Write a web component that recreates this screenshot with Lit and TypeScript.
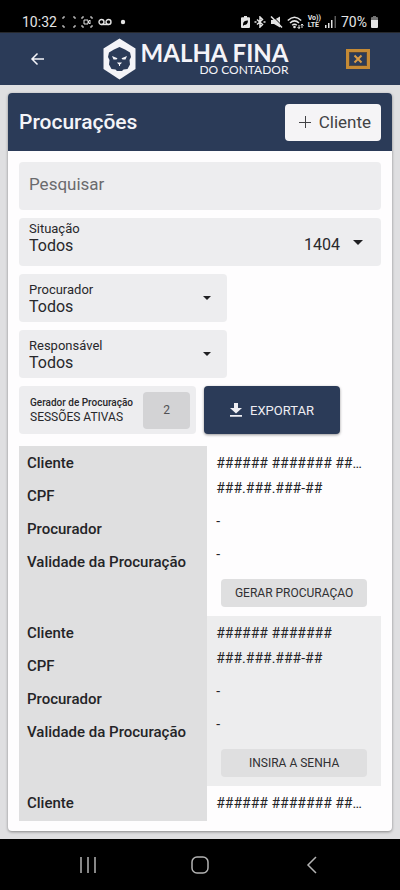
import { LitElement, html, css, svg, nothing } from "lit";
import { customElement, property } from "lit/decorators.js";

interface Cliente {
  nome: string;
  cpf?: string;
  procurador?: string;
  validade?: string;
  acao?: string;
}

const CLIENTES: Cliente[] = [
  { nome: "###### ####### ######", cpf: "###.###.###-##", procurador: "-", validade: "-", acao: "GERAR PROCURAÇAO" },
  { nome: "###### #######", cpf: "###.###.###-##", procurador: "-", validade: "-", acao: "INSIRA A SENHA" },
  { nome: "###### ####### ######" },
];

@customElement("status-bar")
export class StatusBar extends LitElement {
  static styles = css`
    :host {
      display: flex;
      align-items: center;
      justify-content: space-between;
      height: 33px;
      padding: 12px 22px 0;
      box-sizing: border-box;
      background: #000;
      color: #e4e4e4;
      border-bottom: 1px solid #26282c;
      font: 14px/20px Roboto, sans-serif;
    }
    .side { display: flex; align-items: center; gap: 4px; }
    .side:first-child { gap: 5px; }
    .volte {
      display: flex;
      flex-direction: column;
      font: bold 7px/7px Roboto, sans-serif;
    }
    svg { display: block; fill: none; stroke: currentColor; }
    .solid { fill: currentColor; stroke: none; }
  `;

  render() {
    return html`
      <div class="side">
        <span>10:32</span>
        <svg width="14" height="12" viewBox="0 0 14 12"><path d="M1 3V1h2M11 1h2v2M13 9v2h-2M3 11H1V9" /></svg>
        <svg width="12" height="12" viewBox="0 0 12 12"><path d="M1 3V1h2M9 1h2v2M11 9v2H9M3 11H1V9M3 4h4v4H3zM7 6l2-2v4z" /></svg>
        <svg width="14" height="8" viewBox="0 0 14 8"><path stroke-width="1.4" d="M3.5 6.5h7" /><circle cx="3.5" cy="4" r="2.5" stroke-width="1.4" /><circle cx="10.5" cy="4" r="2.5" stroke-width="1.4" /></svg>
        <svg class="solid" width="14" height="6" viewBox="0 0 14 6"><circle cx="6" cy="3" r="2.2" /></svg>
      </div>
      <div class="side">
        <svg class="solid" width="9" height="12" viewBox="0 0 9 12"><path fill-rule="evenodd" d="M3 0h3v1.200h2q1 0 1 1V11q0 1-1 1H1q-1 0-1-1V2.200q0-1 1-1h2zM2 8.500q0-4 5-4-.2 4.500-4 4.500L2 10z" /></svg>
        <svg width="12" height="12" viewBox="0 0 12 12"><path stroke-width="1.500" d="M3 3.500 8.500 8.500 6 11V1l2.500 2.500L3 8.500M.5 6h2M9.500 6h2" /></svg>
        <svg width="13" height="12" viewBox="0 0 13 12"><path class="solid" d="M1 4h3l6-3.500v11L4 8H1z" /><path stroke="#000" stroke-width="1" d="M2.500 0 13 10.500" /><path stroke-width="1.500" d="m1 .5 11 11" /></svg>
        <svg width="17" height="13" viewBox="0 0 17 13"><path stroke-width="1.500" d="M.8 4.500q6.700-6.500 13.400 0M3 7q4.500-4.300 9 0M5.200 9.300q2.300-2.200 4.600 0" /><circle class="solid" cx="7.500" cy="11" r="1.300" /><path d="M12 12.500V9m-1.500 2 1.500 1.500L13 11M15 8v4m-1-2.500L15 8l1.500 1.500" /></svg>
        <span class="volte"><span>Vo))</span><span>LTE</span></span>
        <svg class="solid" width="12" height="12" viewBox="0 0 12 12"><path d="M0 9h1.500v3H0zM3 7h1.500v5H3zM6 4h1.500v8H6z" /><path opacity=".4" d="M9.500 0H11v12H9.500z" /></svg>
        <span>70%</span>
        <svg class="solid" width="7" height="12" viewBox="0 0 7 12"><path opacity=".5" d="M2 0h3v1h1q1 0 1 1v2H0V2q0-1 1-1h1z" /><path d="M0 4h7v7q0 1-1 1H1q-1 0-1-1z" /></svg>
      </div>
    `;
  }
}

@customElement("app-header")
export class AppHeader extends LitElement {
  static styles = css`
    :host {
      display: flex;
      align-items: center;
      justify-content: space-between;
      height: 52px;
      padding: 0 30px;
      box-sizing: border-box;
      background: #2b3b58;
      color: #f4f4f8;
    }
    button { border: 0; padding: 0; background: none; color: inherit; }
    svg { display: block; }
    .brand { display: flex; align-items: center; gap: 5px; color: inherit; text-decoration: none; }
    .words { display: flex; flex-direction: column; align-items: flex-end; }
    .name { font: bold 24px/22px Lato, sans-serif; white-space: nowrap; }
    .sub { font: 12px/12px Lato, sans-serif; white-space: nowrap; }
  `;

  render() {
    return html`
      <button aria-label="Voltar">
        <svg width="15" height="14" viewBox="0 0 15 14" fill="none" stroke="currentColor" stroke-width="1.500"><path d="M14 7H2M7.500 1.500 2 7l5.500 5.500" /></svg>
      </button>
      <a class="brand" href="#">
        <svg width="33" height="42" viewBox="0 0 33 42">
          <path fill="#f4f4f8" d="M16.500.500 32.500 10.500v20.500l-16 10.500L.500 31V10.500z" />
          <path fill="#2b3b58" d="M16.500 9 22 11.500l5 3 1 4.500-1.500 3 .5 4.500-2.500 4.500-4 .5-1.500 1.500h-5L12.500 31.500l-4-.5L6 26.500l.5-4.500L5 19l1-4.500 5-3z" />
          <path fill="#f4f4f8" d="m9 18 5.500 2.200-1 1.300H10.500zM24 18l-5.500 2.200 1 1.300h3zM14 24.500h5l-1.200 1.600-1.300.7-1.300-.7zM16 26h1v2h-1z" />
        </svg>
        <span class="words"><span class="name">MALHA FINA</span><span class="sub">DO CONTADOR</span></span>
      </a>
      <button aria-label="Fechar">
        <svg width="24" height="20" viewBox="0 0 24 20" fill="none"><path stroke="#c58a35" stroke-width="3" d="M1.500 1.500h21v17h-21z" /><path stroke="#7d5524" stroke-width="1" stroke-dasharray="1 1" d="M3.500 3.500h17v13h-17z" /><path stroke="#d99b45" stroke-width="2" d="m8.500 6.500 7 7m0-7-7 7" /></svg>
      </button>
    `;
  }
}

@customElement("filter-select")
export class FilterSelect extends LitElement {
  @property() label = "";
  @property() count = "";
  @property({ type: Boolean, reflect: true }) wide = false;

  static styles = css`
    :host {
      display: flex;
      align-items: center;
      height: 48px;
      width: 208px;
      box-sizing: border-box;
      padding: 0 16px 0 10px;
      border-radius: 4px;
      background: #ededef;
      color: #28282b;
      font-family: Roboto, sans-serif;
    }
    :host([wide]) { width: auto; padding-right: 18px; }
    .text { flex: 1; display: flex; flex-direction: column; }
    :host([wide]) .text { padding-bottom: 10px; }
    label { font-size: 13px; line-height: 17px; }
    select {
      appearance: none;
      border: 0;
      padding: 0;
      background: none;
      color: inherit;
      font: 16px/18px Roboto, sans-serif;
    }
    .count { font-size: 16px; line-height: 18px; padding: 6px 13px 0 0; }
    svg { display: block; fill: #202023; }
  `;

  render() {
    const size = this.wide ? 10 : 8;
    return html`
      <div class="text">
        <label for="s">${this.label}</label>
        <select id="s"><option>Todos</option></select>
      </div>
      ${this.count ? html`<span class="count">${this.count}</span>` : nothing}
      <svg width=${size} height=${size / 2} viewBox="0 0 10 5"><path d="M0 0h10L5 5z" /></svg>
    `;
  }
}

@customElement("clientes-table")
export class ClientesTable extends LitElement {
  static styles = css`
    :host { display: block; }
    table {
      width: 100%;
      table-layout: fixed;
      border-collapse: collapse;
      color: #242427;
      font: 15px/16px Roboto, sans-serif;
    }
    th {
      width: 52%;
      height: 33px;
      box-sizing: border-box;
      padding: 0 8px;
      background: #dfdfe0;
      font-weight: 500;
      text-align: left;
      white-space: nowrap;
    }
    td {
      padding: 0 13px 0 9px;
      font-size: 14px;
      line-height: 18px;
      vertical-align: top;
      white-space: nowrap;
      overflow: hidden;
      text-overflow: ellipsis;
    }
    .name td { vertical-align: middle; }
    .action th { height: 38px; }
    .action td { padding: 1px 14px; }
    tbody:nth-child(even) td { background: #ededee; }
    tbody:last-child th { height: 35px; }
    tbody:last-child :is(th, td) { padding-bottom: 2px; }
    button {
      width: 100%;
      height: 28px;
      border: 0;
      border-radius: 4px;
      padding: 0;
      background: #dfdfe0;
      color: #303033;
      font: 12px/16px Roboto, sans-serif;
    }
  `;

  private row(rotulo: string, valor?: string, kind = "") {
    return valor ? html`<tr class=${kind}><th scope="row">${rotulo}</th><td>${valor}</td></tr>` : nothing;
  }

  render() {
    return html`
      <table>
        ${CLIENTES.map((c) => html`
          <tbody>
            ${this.row("Cliente", c.nome, "name")}
            ${this.row("CPF", c.cpf)}
            ${this.row("Procurador", c.procurador)}
            ${this.row("Validade da Procuração", c.validade)}
            ${c.acao ? html`<tr class="action"><th></th><td><button>${c.acao}</button></td></tr>` : nothing}
          </tbody>`)}
      </table>
    `;
  }
}

@customElement("app-root")
export class AppRoot extends LitElement {
  static styles = css`
    :host {
      display: flex;
      flex-direction: column;
      min-height: 100vh;
      background: #dfdfe1;
      font-family: Roboto, sans-serif;
    }
    main { flex: 1; padding: 8px; }
    .card {
      border-radius: 4px;
      background: #fefdfe;
      box-shadow: 0 1px 3px #00000066;
    }
    .title {
      display: flex;
      align-items: center;
      justify-content: space-between;
      height: 58px;
      box-sizing: border-box;
      padding: 0 11px;
      border-radius: 4px 4px 0 0;
      background: #2b3b58;
      color: #f4f4f8;
    }
    h1 { margin: 0; font-size: 21px; line-height: 24px; font-weight: 500; }
    button { border: 0; font-family: inherit; }
    .add {
      display: flex;
      align-items: center;
      gap: 8px;
      height: 37px;
      padding: 0 10px 0 14px;
      border-radius: 4px;
      background: #f5f4f6;
      color: #424245;
      font-size: 17px;
    }
    .body { padding: 11px 11px 10px; }
    .filters { display: flex; flex-direction: column; gap: 8px; margin-bottom: 12px; }
    input {
      height: 48px;
      width: 100%;
      box-sizing: border-box;
      border: 0;
      border-radius: 4px;
      padding: 0 10px 4px;
      background: #ededef;
      font: 17px/20px Roboto, sans-serif;
    }
    input::placeholder { color: #6a6a6d; opacity: 1; }
    .actions { display: flex; gap: 8px; }
    .sessions {
      display: flex;
      align-items: center;
      justify-content: space-between;
      width: 177px;
      height: 48px;
      box-sizing: border-box;
      padding: 0 6px 0 11px;
      border-radius: 4px;
      background: #ededef;
      color: #28282b;
      white-space: nowrap;
    }
    .sessions strong { display: block; font-size: 10px; line-height: 14px; font-weight: 500; }
    .sessions span { display: block; font-size: 12px; line-height: 14px; }
    .total {
      width: 47px;
      height: 37px;
      border-radius: 4px;
      padding: 0;
      background: #d3d3d5;
      color: #505053;
      font-size: 12px;
    }
    .export {
      display: flex;
      align-items: center;
      justify-content: center;
      gap: 8px;
      width: 136px;
      height: 48px;
      border-radius: 4px;
      background: #2b3b58;
      color: #eeeef3;
      box-shadow: 0 1px 3px #00000066;
      font-size: 13px;
    }
    svg { display: block; }
    nav {
      display: flex;
      align-items: center;
      justify-content: space-around;
      height: 51px;
      padding: 0 32px;
      background: #000;
    }
    nav button { padding: 0; background: none; }
    nav svg { fill: none; stroke: #b4b4b4; stroke-width: 1.5; }
  `;

  private navButton(label: string, shape: unknown) {
    return html`<button aria-label=${label}><svg width="18" height="18" viewBox="0 0 18 18">${shape}</svg></button>`;
  }

  render() {
    return html`
      <status-bar></status-bar>
      <app-header></app-header>
      <main>
        <section class="card">
          <div class="title">
            <h1>Procurações</h1>
            <button class="add">
              <svg width="12" height="12" viewBox="0 0 12 12" stroke="currentColor"><path d="M6.500 0v12M0 6.500h12" /></svg>
              Cliente
            </button>
          </div>
          <div class="body">
            <div class="filters">
              <input type="search" aria-label="Pesquisar" placeholder="Pesquisar" />
              <filter-select wide label="Situação" count="1404"></filter-select>
              <filter-select label="Procurador"></filter-select>
              <filter-select label="Responsável"></filter-select>
              <div class="actions">
                <div class="sessions">
                  <div><strong>Gerador de Procuração</strong><span>SESSÕES ATIVAS</span></div>
                  <button class="total">2</button>
                </div>
                <button class="export">
                  <svg width="12" height="14" viewBox="0 0 12 14" fill="currentColor"><path d="M4 0h4v5h4L6 10.500 0 5h4zM0 12h12v1.800H0z" /></svg>
                  EXPORTAR
                </button>
              </div>
            </div>
            <clientes-table></clientes-table>
          </div>
        </section>
      </main>
      <nav>
        ${this.navButton("Recentes", svg`<path d="M2 1v16M9 1v16M16 1v16" />`)}
        ${this.navButton("Início", svg`<rect x="1" y="1" width="16" height="16" rx="5" />`)}
        ${this.navButton("Voltar", svg`<path d="M13 1 5 9l8 8" />`)}
      </nav>
    `;
  }
}
